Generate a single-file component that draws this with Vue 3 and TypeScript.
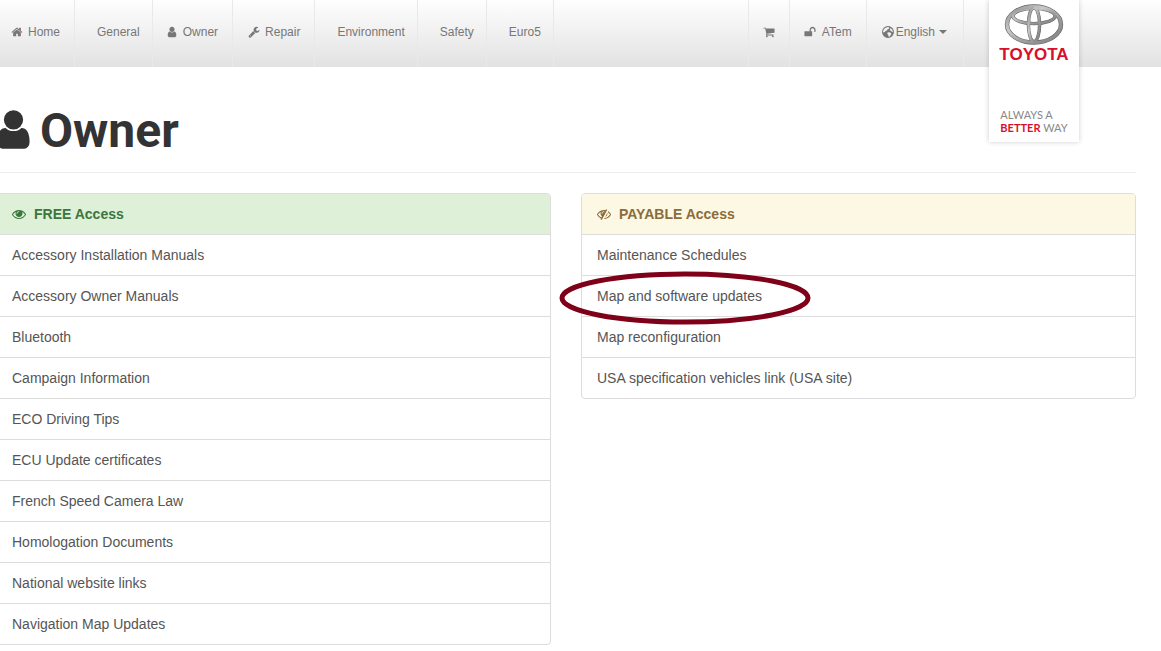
<script setup lang="ts">
interface NavItem {
  label: string
  icon?: string
  size: string
}

const icons: Record<string, string> = {
  home: 'M1472 992v480q0 26-19 45t-45 19h-384v-384h-256v384h-384q-26 0-45-19t-19-45v-480q0-1 .5-3t.5-3l575-474 575 474q1 2 1 6zm223-69l-62 74q-8 9-21 11h-3q-13 0-21-7l-692-577-692 577q-12 8-24 7-13-2-21-11l-62-74q-8-10-7-23.5t11-21.5l719-599q32-26 76-26t76 26l244 204v-195q0-14 9-23t23-9h192q14 0 23 9t9 23v408l219 182q10 8 11 21.5t-7 23.5z',
  user: 'M1536 1399q0 109-62.5 187t-150.5 78h-854q-88 0-150.5-78t-62.5-187q0-85 8.5-160.5t31.5-152 58.5-131 94-89 134.5-34.5q131 128 313 128t313-128q76 0 134.5 34.5t94 89 58.5 131 31.5 152 8.5 160.5zm-256-887q0 159-112.5 271.5t-271.5 112.5-271.5-112.5-112.5-271.5 112.5-271.5 271.5-112.5 271.5 112.5 112.5 271.5z',
  wrench: 'M448 1472q0-26-19-45t-45-19-45 19-19 45 19 45 45 19 45-19 19-45zm644-420l-682 682q-37 37-90 37-52 0-91-37l-106-108q-38-36-38-90 0-53 38-91l681-681q39 98 114.5 173.5t173.5 114.5zm634-435q0 39-23 106-47 134-164.5 217.5t-258.5 83.5q-185 0-316.5-131.5t-131.5-316.5 131.5-316.5 316.5-131.5q58 0 121.5 16.5t107.5 46.5q16 11 16 28t-16 28l-293 169v224l193 107q5-3 79-48.5t135.5-81 70.5-35.5q15 0 23.5 10t8.5 25z',
  cart: 'M704 1536q0 52-38 90t-90 38-90-38-38-90 38-90 90-38 90 38 38 90zm896 0q0 52-38 90t-90 38-90-38-38-90 38-90 90-38 90 38 38 90zm128-1088v512q0 24-16.5 42.5t-40.5 21.5l-1044 122q13 60 13 70 0 16-24 64h920q26 0 45 19t19 45-19 45-45 19h-1024q-26 0-45-19t-19-45q0-11 8-31.5t16-36 21.5-40 15.5-29.5l-177-823h-204q-26 0-45-19t-19-45 19-45 45-19h256q16 0 28.5 6.5t19.5 15.5 13 24.5 8 26 5.5 29.5 4.5 26h1201q26 0 45 19t19 45z',
  unlock: 'M1728 576v256q0 26-19 45t-45 19h-64q-26 0-45-19t-19-45v-256q0-106-75-181t-181-75-181 75-75 181v192h96q40 0 68 28t28 68v576q0 40-28 68t-68 28h-960q-40 0-68-28t-28-68v-576q0-40 28-68t68-28h672v-192q0-185 131.5-316.5t316.5-131.5 316.5 131.5 131.5 316.5z',
  eye: 'M1664 960q-152-236-381-353 61 104 61 225 0 185-131.5 316.5t-316.5 131.5-316.5-131.5-131.5-316.5q0-121 61-225-229 117-381 353 133 205 333.5 326.5t434.5 121.5 434.5-121.5 333.5-326.5zm-720-384q0-20-14-34t-34-14q-125 0-214.5 89.5t-89.5 214.5q0 20 14 34t34 14 34-14 14-34q0-86 61-147t147-61q20 0 34-14t14-34zm848 384q0 34-20 69-140 230-376.5 368.5t-499.5 138.5-499.5-139-376.5-368q-20-35-20-69t20-69q140-229 376.5-368t499.5-139 499.5 139 376.5 368q20 35 20 69z',
  eyeSlash: 'M555 1335l78-141q-87-63-136-159t-49-203q0-121 61-225-229 117-381 353 167 258 427 375zm389-759q0-20-14-34t-34-14q-125 0-214.5 89.5t-89.5 214.5q0 20 14 34t34 14 34-14 14-34q0-86 61-147t147-61q20 0 34-14t14-34zm363-191q0 7-1 9-106 189-316 567t-315 566l-49 89q-10 16-28 16-12 0-134-70-16-10-16-28 0-12 44-87-143-65-263.5-173t-208.5-245q-20-31-20-69t20-69q153-235 380-371t496-136q89 0 180 17l54-97q10-16 28-16 5 0 18 6t31 15.5 33 18.5 31.5 18.5 19.5 11.5q16 10 16 27zm37 447q0 139-79 253.5t-209 164.5l280-502q8 45 8 84zm448 128q0 35-20 69-39 64-109 145-150 172-347.5 267t-419.5 95l74-132q212-18 392.5-137t301.5-307q-115-179-282-294l63-112q95 64 182.5 153t144.5 184q20 34 20 69z',
}

const nav: NavItem[] = [
  { label: 'Home', icon: 'home', size: 'home' },
  { label: 'General', size: 'plain' },
  { label: 'Owner', icon: 'user', size: 'person' },
  { label: 'Repair', icon: 'wrench', size: 'repair' },
  { label: 'Environment', size: 'plain' },
  { label: 'Safety', size: 'plain' },
  { label: 'Euro5', size: 'plain' },
]

const panels = [
  {
    kind: 'free',
    icon: 'eye',
    title: 'FREE Access',
    links: [
      'Accessory Installation Manuals',
      'Accessory Owner Manuals',
      'Bluetooth',
      'Campaign Information',
      'ECO Driving Tips',
      'ECU Update certificates',
      'French Speed Camera Law',
      'Homologation Documents',
      'National website links',
      'Navigation Map Updates',
    ],
  },
  {
    kind: 'payable',
    icon: 'eyeSlash',
    title: 'PAYABLE Access',
    links: [
      'Maintenance Schedules',
      'Map and software updates',
      'Map reconfiguration',
      'USA specification vehicles link (USA site)',
    ],
  },
]
</script>

<template>
  <div class="page">
    <header class="bar">
      <nav class="menu" aria-label="Main">
        <a v-for="item in nav" :key="item.label" href="#" :class="['item', item.size]">
          <svg v-if="item.icon" class="icon" viewBox="0 0 1792 1792" aria-hidden="true">
            <path :d="icons[item.icon]" />
          </svg>
          <span>{{ item.label }}</span>
        </a>
      </nav>
      <nav class="menu tools" aria-label="Account">
        <a href="#" class="item cart" aria-label="Shopping cart">
          <svg class="icon" viewBox="0 0 1792 1792" aria-hidden="true"><path :d="icons.cart" /></svg>
        </a>
        <a href="#" class="item account">
          <svg class="icon" viewBox="0 0 1792 1792" aria-hidden="true"><path :d="icons.unlock" /></svg>
          <span>ATem</span>
        </a>
        <button type="button" class="item language">
          <svg class="globe" viewBox="0 0 12 12" aria-hidden="true">
            <circle cx="6" cy="6" r="5.4" fill="#777" stroke="#777" stroke-width="1.1" />
            <path d="M4.800 1.300L6.500 1.100 7.300 2 6.600 3 5.400 3.400 4.900 4.600 3.500 4.900 2.900 6.100 1.200 6.600 1 5.200 1.900 3.200 3.300 2zM8.500 2.100L10.300 3.700 10.900 5.800 10.100 6.200 9.300 4.900 8.200 4.500 7.900 3.300zM5.800 6.300L8.300 6.600 9.400 7.700 8.500 9.200 7.300 10.700 6.400 10.400 6.300 8.800 5.200 7.700z" fill="#f1f1f1" />
          </svg>
          <span>English</span>
          <span class="caret"></span>
        </button>
      </nav>
      <a href="#" class="brand" aria-label="Toyota home">
        <svg class="emblem" viewBox="0 0 60 42" aria-hidden="true">
          <defs>
            <linearGradient id="metal" x1="0" y1="0" x2="1" y2="1">
              <stop offset="0" stop-color="#8c8c8c" />
              <stop offset=".35" stop-color="#c9c9c9" />
              <stop offset=".6" stop-color="#a0a0a0" />
              <stop offset="1" stop-color="#808080" />
            </linearGradient>
          </defs>
          <g fill="none" stroke="#666">
            <ellipse cx="30" cy="20.500" rx="27" ry="18" stroke-width="4.400" />
            <ellipse cx="30" cy="12" rx="21" ry="7.600" stroke-width="3.400" />
            <ellipse cx="30" cy="20.500" rx="5.600" ry="17" stroke-width="3.400" />
          </g>
          <g fill="none" stroke="url(#metal)">
            <ellipse cx="30" cy="20.500" rx="27" ry="18" stroke-width="3.200" />
            <ellipse cx="30" cy="12" rx="21" ry="7.600" stroke-width="2.400" />
            <ellipse cx="30" cy="20.500" rx="5.600" ry="17" stroke-width="2.400" />
          </g>
        </svg>
        <strong class="wordmark">TOYOTA</strong>
        <span class="slogan">ALWAYS A<br /><b>BETTER</b> WAY</span>
      </a>
    </header>

    <main class="content">
      <h1 class="title">
        <svg class="icon" viewBox="0 0 1792 1792" aria-hidden="true"><path :d="icons.user" /></svg>
        <span>Owner</span>
      </h1>
      <div class="columns">
        <section v-for="panel in panels" :key="panel.kind" :class="['panel', panel.kind]">
          <h2 class="heading">
            <svg class="icon" viewBox="0 0 1792 1792" aria-hidden="true"><path :d="icons[panel.icon]" /></svg>
            <span>{{ panel.title }}</span>
          </h2>
          <a v-for="link in panel.links" :key="link" href="#" class="row">{{ link }}</a>
          <svg v-if="panel.kind === 'payable'" class="marker" viewBox="0 0 254 56" aria-hidden="true">
            <ellipse cx="127" cy="28" rx="123" ry="24" />
          </svg>
        </section>
      </div>
    </main>
  </div>
</template>

<style>
body {
  margin: 0;
  background: #fff;
  overflow-x: hidden;
}
</style>

<style scoped>
.page {
  font-family: "Liberation Sans", Arial, sans-serif;
  font-size: 14px;
  line-height: 20px;
  color: #333;
}

.page * {
  box-sizing: border-box;
}

.page a {
  color: #555;
  text-decoration: none;
}

.icon {
  display: block;
  flex: none;
  width: 12px;
  height: 12px;
  fill: currentColor;
}

.bar {
  position: relative;
  display: flex;
  justify-content: space-between;
  height: 67px;
  padding-right: 197px;
  background: linear-gradient(#fefefe, #e2e2e2);
}

.menu {
  display: flex;
}

.page .menu .item {
  display: flex;
  align-items: center;
  gap: 5px;
  padding: 0 14px 4px;
  border: 0;
  border-right: 1px solid #e9e9e9;
  background: none;
  font: 12px/20px "Liberation Sans", Arial, sans-serif;
  color: #777;
}

.page .menu .home {
  padding-left: 11px;
}

.page .menu .plain {
  padding-left: 22px;
  padding-right: 12px;
}

.page .menu .person {
  padding-left: 13px;
}

.page .menu .repair {
  padding-left: 15px;
}

.tools {
  border-left: 1px solid #e9e9e9;
}

.page .menu .account {
  gap: 6px;
}

.page .menu .language {
  gap: 2px;
  padding-left: 15px;
  padding-right: 16px;
}

.globe {
  width: 12px;
  height: 12px;
}

.caret {
  margin-left: 2px;
  border: 4px solid transparent;
  border-top-color: currentColor;
  border-bottom: 0;
}

.brand {
  position: absolute;
  top: 0;
  right: 82px;
  display: flex;
  flex-direction: column;
  align-items: center;
  width: 90px;
  height: 142px;
  padding-top: 4px;
  background: #fff;
  box-shadow: 0 0 5px rgba(0, 0, 0, 0.2);
}

.emblem {
  width: 60px;
  height: 42px;
}

.wordmark {
  font: 700 17px/18px "Liberation Sans", Arial, sans-serif;
  color: #d8102b;
}

.slogan {
  margin-top: 44px;
  font: 12px/13px Lato, sans-serif;
  font-size: 11px;
  white-space: nowrap;
  color: #888;
}

.slogan b {
  color: #d8102b;
}

.content {
  margin: 0 25px 0 -4px;
}

.title {
  display: flex;
  align-items: center;
  gap: 4px;
  margin: 0 0 20px;
  padding: 39px 0 16px;
  border-bottom: 1px solid #eee;
  font: 700 48px/50px Roboto, sans-serif;
  color: #333;
}

.title .icon {
  width: 45px;
  height: 45px;
  margin: 0 0 3px -5px;
}

.columns {
  display: grid;
  grid-template-columns: 1fr 1fr;
  align-items: start;
  gap: 30px;
}

.panel {
  position: relative;
  border: 1px solid #ddd;
  border-radius: 4px;
}

.heading {
  display: flex;
  align-items: center;
  gap: 8px;
  margin: 0;
  padding: 10px 15px;
  border-radius: 3px 3px 0 0;
  font-size: 14px;
  line-height: 20px;
}

.heading .icon {
  width: 14px;
  height: 14px;
}

.free .heading {
  background: #dff0d8;
  color: #3c763d;
}

.payable .heading {
  background: #fcf8e3;
  color: #8a6d3b;
}

.row {
  display: block;
  padding: 10px 15px;
  border-top: 1px solid #ddd;
}

.marker {
  position: absolute;
  top: 76px;
  left: -24px;
  width: 254px;
  height: 56px;
  fill: none;
  stroke: #7f0019;
  stroke-width: 5;
  pointer-events: none;
}
</style>
